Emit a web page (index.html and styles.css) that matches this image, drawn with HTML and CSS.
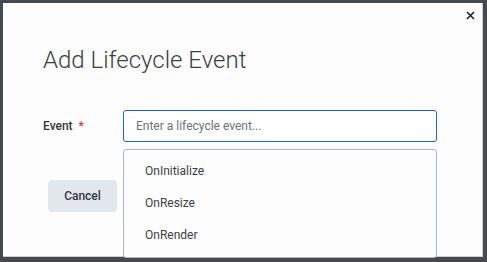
FILE: index.html
```html
<!DOCTYPE html>
<html>
<head>
<meta charset="utf-8">
<link rel="stylesheet" href="styles.css">
</head>
<body>
<div class="modal">
  <button class="close" aria-label="Close">
    <svg width="9" height="9" viewBox="0 0 9 9"><path d="M1 1L8 8M8 1L1 8" stroke="#222" stroke-width="1.6"/></svg>
  </button>
  <h1 class="title">Add Lifecycle Event</h1>
  <div class="form">
    <div class="row">
      <label class="label">Event <span class="req">*</span></label>
      <div class="field">
        <input class="input" placeholder="Enter a lifecycle event...">
      </div>
    </div>
    <div class="row second">
      <div class="actions"><button class="cancel">Cancel</button></div>
      <ul class="menu">
        <li>OnInitialize</li>
        <li>OnResize</li>
        <li>OnRender</li>
      </ul>
    </div>
  </div>
</div>
</body>
</html>
```
FILE: styles.css
```css
html, body { margin: 0; padding: 0; }
body {
  background: #46494d;
  width: 487px;
  height: 262px;
  overflow: hidden;
  font-family: Roboto, "Liberation Sans", sans-serif;
}
.modal {
  position: relative;
  margin: 3px 0 0 3px;
  width: 480px;
  height: 254px;
  background: #fdfdfd;
  border-right: 1px solid #c9ced4;
  border-bottom: 1px solid #c9ced4;
  box-sizing: border-box;
  padding: 0 0 0 40px;
}
.close {
  position: absolute;
  top: 7px;
  right: 6px;
  border: 0;
  background: none;
  padding: 0;
  width: 11px;
  height: 11px;
  display: flex;
  align-items: center;
  justify-content: center;
}
.title {
  margin: 0;
  padding-top: 42px;
  font-size: 24px;
  line-height: 30px;
  font-weight: 300;
  color: #3b3f44;
}
.form { margin-top: 35px; }
.row { display: flex; }
.label {
  width: 80px;
  font-size: 12px;
  font-weight: 500;
  color: #33373c;
  line-height: 32px;
}
.req { color: #d9363e; margin-left: 3px; }
.field { width: 314px; }
.input {
  box-sizing: border-box;
  width: 314px;
  height: 32px;
  border: 1px solid #2b62c6;
  border-radius: 3px;
  padding: 0 12px;
  font-family: inherit;
  font-size: 12px;
  color: #333;
  outline: none;
  background: #fff;
}
.input::placeholder { color: #6d7278; }
.second { margin-top: 7px; }
.actions { width: 80px; padding-top: 31px; }
.cancel {
  margin-left: 5px;
  width: 69px;
  height: 32px;
  border: 0;
  border-radius: 4px;
  background: #e2e7ee;
  font-family: inherit;
  font-size: 12px;
  font-weight: 500;
  color: #33373c;
}
.menu {
  list-style: none;
  margin: 0;
  padding: 5px 0;
  box-sizing: border-box;
  width: 314px;
  height: 109px;
  border: 1px solid #adb5bf;
  border-radius: 3px;
  background: #fdfdfd;
}
.menu li {
  height: 32px;
  line-height: 32px;
  padding-left: 21px;
  font-size: 12px;
  color: #3d4147;
}
```
